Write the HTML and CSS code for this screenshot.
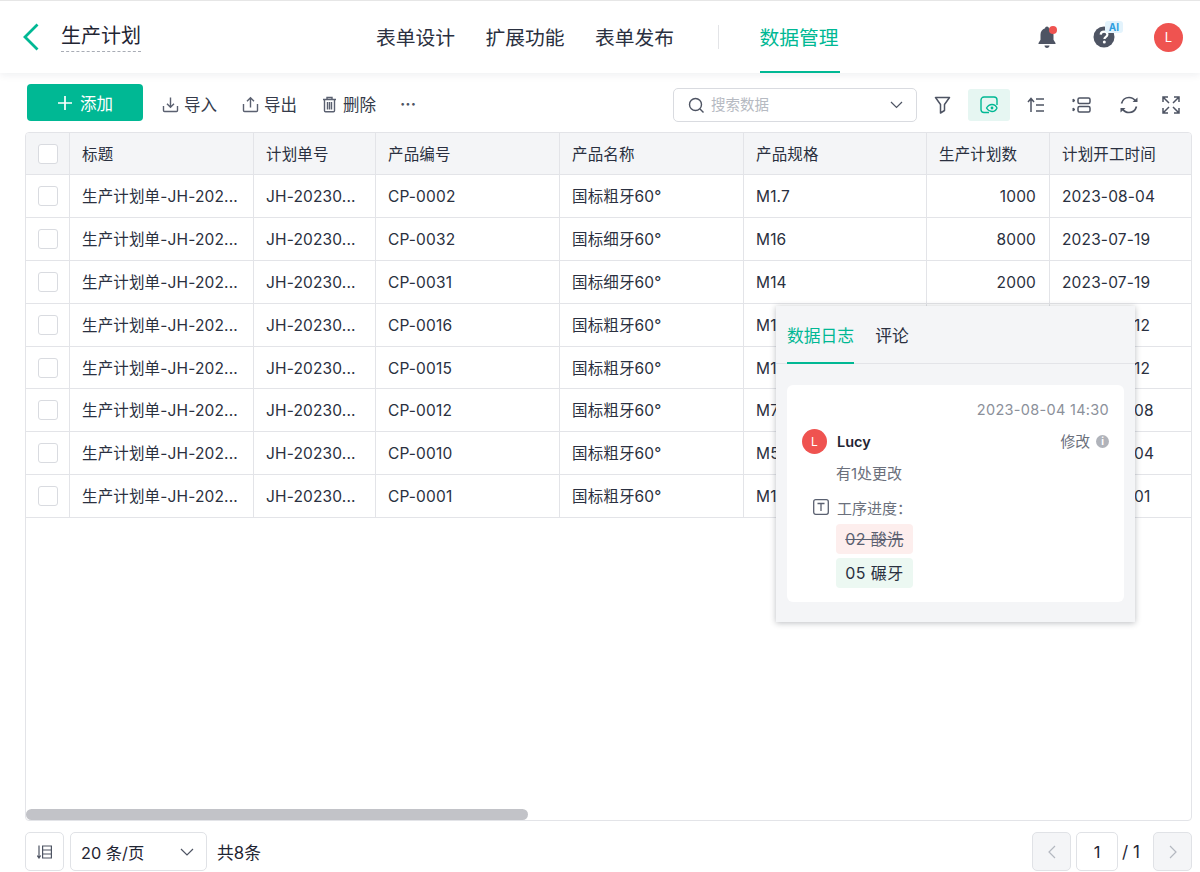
FILE: index.html
```html
<!DOCTYPE html>
<html lang="zh">
<head>
<meta charset="utf-8">
<title>生产计划</title>
<link rel="stylesheet" href="styles.css">
</head>
<body>
<header class="topbar">
  <div class="top-left">
    <svg class="back" width="18" height="28" viewBox="0 0 18 28"><path d="M15.500 1.500 L3 14 L15.500 26.500" fill="none" stroke="#00b894" stroke-width="2.800"/></svg>
    <span class="app-name">生产计划</span>
  </div>
  <nav class="nav">
    <span class="nav-item">表单设计</span>
    <span class="nav-item">扩展功能</span>
    <span class="nav-item">表单发布</span>
    <span class="nav-sep"></span>
    <span class="nav-item active">数据管理</span>
  </nav>
  <div class="top-right">
    <span class="ico-bell">
      <svg width="20" height="24" viewBox="0 0 20 24"><path d="M10 1.500c1.100 0 1.800.8 1.900 1.700 3 .9 4.600 3.300 4.600 6.500v5l2 3.300v1H1.500v-1l2-3.300v-5c0-3.200 1.600-5.600 4.600-6.500.1-.9.800-1.700 1.900-1.700zM7.500 20.500h5c0 1.500-1.100 2.500-2.500 2.500s-2.500-1-2.500-2.500z" fill="#4e5463"/></svg>
      <i class="dot"></i>
    </span>
    <span class="ico-help">
      <svg width="22" height="22" viewBox="0 0 22 22"><circle cx="11" cy="11" r="10.500" fill="#4e5463"/><path d="M7.700 8.600c.1-1.900 1.500-3 3.400-3s3.300 1.100 3.300 2.800c0 2.400-3 2.500-3 4.700" fill="none" stroke="#fff" stroke-width="2.200"/><circle cx="11.300" cy="16" r="1.500" fill="#fff"/></svg>
      <b class="ai">AI</b>
    </span>
    <span class="avatar big">L</span>
  </div>
</header>

<section class="toolbar">
  <div class="tools-left">
    <button class="add"><svg width="16" height="16" viewBox="0 0 16 16"><path d="M8 1v14M1 8h14" stroke="#fff" stroke-width="1.700"/></svg><span>添加</span></button>
    <span class="tool"><svg width="17" height="17" viewBox="0 0 17 17"><path d="M8.500 1.500v9.500M5 7.800l3.500 3.400L12 7.800M1.500 10v4.500a1 1 0 0 0 1 1h12a1 1 0 0 0 1-1V10" fill="none" stroke="#5a6070" stroke-width="1.400"/></svg>导入</span>
    <span class="tool"><svg width="17" height="17" viewBox="0 0 17 17"><path d="M8.500 11.500V1.800M5 5.200l3.500-3.400L12 5.200M1.500 8v6.500a1 1 0 0 0 1 1h12a1 1 0 0 0 1-1V8" fill="none" stroke="#5a6070" stroke-width="1.400"/></svg>导出</span>
    <span class="tool"><svg width="15" height="17" viewBox="0 0 15 17"><path d="M1 3.500h13M5 3.500V1.500h5v2M2.500 3.500v11.200a1 1 0 0 0 1 1h8a1 1 0 0 0 1-1V3.500M5.500 6v7.500M7.500 6v7.500M9.500 6v7.500" fill="none" stroke="#5a6070" stroke-width="1.400"/></svg>删除</span>
    <span class="more">···</span>
  </div>
  <div class="tools-right">
    <div class="search">
      <svg width="17" height="17" viewBox="0 0 17 17"><circle cx="7.500" cy="7.500" r="6" fill="none" stroke="#4e5463" stroke-width="1.400"/><path d="M12 12l3.500 3.500" stroke="#4e5463" stroke-width="1.400"/></svg>
      <span class="ph">搜索数据</span>
      <svg class="chev" width="13" height="8" viewBox="0 0 13 8"><path d="M1 1l5.500 5.500L12 1" fill="none" stroke="#4e5463" stroke-width="1.200"/></svg>
    </div>
    <span class="ibtn i-filter"><svg width="17" height="18" viewBox="0 0 17 18"><path d="M1.500 1.500h14l-5 7v6l-4 2.500V8.500z" fill="none" stroke="#4e5463" stroke-width="1.500" stroke-linejoin="round"/></svg></span>
    <span class="ibtn on"><svg width="18" height="18" viewBox="0 0 18 18"><path d="M9 16.500H4a3 3 0 0 1-3-3V4a3 3 0 0 1 3-3h10a3 3 0 0 1 3 3v5" fill="none" stroke="#00b894" stroke-width="1.400"/><path d="M6.500 12c1.500-2.500 3.500-3.500 5.500-3.500s4 1 5 3.500c-1 2.500-3 3.500-5 3.500s-4-1-5.500-3.500z" fill="#e6f6f2" stroke="#00b894" stroke-width="1.300"/><circle cx="12" cy="12" r="1.400" fill="#00b894"/></svg></span>
    <span class="ibtn i-sort"><svg width="18" height="16" viewBox="0 0 18 16"><path d="M4 15V2M1 5l3-3.500L7 5M9 2h8M9 8h8M9 14h8" fill="none" stroke="#4e5463" stroke-width="1.500"/></svg></span>
    <span class="ibtn i-group"><svg width="19" height="16" viewBox="0 0 19 16"><rect x="6" y="1" width="12" height="5.500" rx="1.500" fill="none" stroke="#4e5463" stroke-width="1.500"/><rect x="6" y="9.500" width="12" height="5.500" rx="1.500" fill="none" stroke="#4e5463" stroke-width="1.500"/><path d="M1 2v3l2-1.500zM1 11v3l2-1.500z" fill="#4e5463" stroke="#4e5463"/></svg></span>
    <span class="ibtn i-refresh"><svg width="20" height="18" viewBox="0 0 20 18"><path d="M2.500 7.500C3.500 4 6.500 1.500 10 1.500c2.800 0 5 1.300 6.500 3.500M17.500 10.500c-1 3.500-4 6-7.500 6-2.800 0-5-1.300-6.500-3.500" fill="none" stroke="#4e5463" stroke-width="1.700"/><path d="M13.500 6h5V1.500zM6.500 12h-5v4.500z" fill="#4e5463"/></svg></span>
    <span class="ibtn"><svg width="18" height="18" viewBox="0 0 18 18"><path d="M1 6V1h5M12 1h5v5M17 12v5h-5M6 17H1v-5M1.500 1.500L7 7M16.500 1.500L11 7M16.500 16.500L11 11M1.500 16.500L7 11" fill="none" stroke="#4e5463" stroke-width="1.500"/></svg></span>
  </div>
</section>

<main class="table">
  <div class="row head">
    <div class="cell c0"><i class="check"></i></div>
    <div class="cell c1">标题</div><div class="cell c2">计划单号</div><div class="cell c3">产品编号</div><div class="cell c4">产品名称</div><div class="cell c5">产品规格</div><div class="cell c6">生产计划数</div><div class="cell c7">计划开工时间</div>
  </div>
  <div class="row"><div class="cell c0"><i class="check"></i></div><div class="cell c1">生产计划单-JH-202...</div><div class="cell c2">JH-20230...</div><div class="cell c3">CP-0002</div><div class="cell c4">国标粗牙60°</div><div class="cell c5">M1.7</div><div class="cell c6 num">1000</div><div class="cell c7">2023-08-04</div></div>
  <div class="row"><div class="cell c0"><i class="check"></i></div><div class="cell c1">生产计划单-JH-202...</div><div class="cell c2">JH-20230...</div><div class="cell c3">CP-0032</div><div class="cell c4">国标细牙60°</div><div class="cell c5">M16</div><div class="cell c6 num">8000</div><div class="cell c7">2023-07-19</div></div>
  <div class="row"><div class="cell c0"><i class="check"></i></div><div class="cell c1">生产计划单-JH-202...</div><div class="cell c2">JH-20230...</div><div class="cell c3">CP-0031</div><div class="cell c4">国标细牙60°</div><div class="cell c5">M14</div><div class="cell c6 num">2000</div><div class="cell c7">2023-07-19</div></div>
  <div class="row"><div class="cell c0"><i class="check"></i></div><div class="cell c1">生产计划单-JH-202...</div><div class="cell c2">JH-20230...</div><div class="cell c3">CP-0016</div><div class="cell c4">国标粗牙60°</div><div class="cell c5">M12</div><div class="cell c6 num">3000</div><div class="cell c7">2023-07-12</div></div>
  <div class="row"><div class="cell c0"><i class="check"></i></div><div class="cell c1">生产计划单-JH-202...</div><div class="cell c2">JH-20230...</div><div class="cell c3">CP-0015</div><div class="cell c4">国标粗牙60°</div><div class="cell c5">M10</div><div class="cell c6 num">5000</div><div class="cell c7">2023-07-12</div></div>
  <div class="row"><div class="cell c0"><i class="check"></i></div><div class="cell c1">生产计划单-JH-202...</div><div class="cell c2">JH-20230...</div><div class="cell c3">CP-0012</div><div class="cell c4">国标粗牙60°</div><div class="cell c5">M7</div><div class="cell c6 num">4000</div><div class="cell c7">2023-07-08</div></div>
  <div class="row"><div class="cell c0"><i class="check"></i></div><div class="cell c1">生产计划单-JH-202...</div><div class="cell c2">JH-20230...</div><div class="cell c3">CP-0010</div><div class="cell c4">国标粗牙60°</div><div class="cell c5">M5</div><div class="cell c6 num">6000</div><div class="cell c7">2023-07-04</div></div>
  <div class="row"><div class="cell c0"><i class="check"></i></div><div class="cell c1">生产计划单-JH-202...</div><div class="cell c2">JH-20230...</div><div class="cell c3">CP-0001</div><div class="cell c4">国标粗牙60°</div><div class="cell c5">M1.6</div><div class="cell c6 num">1000</div><div class="cell c7">2023-07-01</div></div>
  <div class="thumb"></div>
</main>

<footer class="pager">
  <div class="pager-left">
    <span class="pbtn"><svg width="15" height="14" viewBox="0 0 15 14"><path d="M2 .5v12M.3 10.500L2 13l1.700-2.500M5.600 1h8.800v12H5.600zM5.600 5h8.800M5.600 9h8.800" fill="none" stroke="#4e5463" stroke-width="1.200"/></svg></span>
    <span class="psize">20 条/页<svg width="14" height="8" viewBox="0 0 14 8"><path d="M1 1l6 6 6-6" fill="none" stroke="#4e5463" stroke-width="1.200"/></svg></span>
    <span class="total">共8条</span>
  </div>
  <div class="pager-right">
    <span class="pbtn off"><svg width="10" height="14" viewBox="0 0 10 14"><path d="M8 1L2 7l6 6" fill="none" stroke="#b4b8c0" stroke-width="1.200"/></svg></span>
    <span class="pinput">1</span>
    <span class="ptotal">/ 1</span>
    <span class="pbtn off"><svg width="10" height="14" viewBox="0 0 10 14"><path d="M2 1l6 6-6 6" fill="none" stroke="#b4b8c0" stroke-width="1.200"/></svg></span>
  </div>
</footer>

<aside class="panel">
  <div class="tabs">
    <span class="tab active">数据日志</span>
    <span class="tab">评论</span>
  </div>
  <div class="log">
    <div class="log-time">2023-08-04 14:30</div>
    <div class="log-head">
      <span class="avatar small">L</span>
      <b class="log-user">Lucy</b>
      <span class="log-type">修改<i class="info">i</i></span>
    </div>
    <div class="log-desc">有1处更改</div>
    <div class="log-field">
      <svg width="16" height="16" viewBox="0 0 16 16"><rect x=".7" y=".7" width="14.600" height="14.600" rx="2" fill="none" stroke="#5a6070" stroke-width="1.300"/><path d="M4.500 4.500h7M8 4.500v7.500" fill="none" stroke="#5a6070" stroke-width="1.300"/></svg>
      <span>工序进度：</span>
    </div>
    <div class="tag del">02 酸洗</div>
    <div class="tag new">05 碾牙</div>
  </div>
</aside>
</body>
</html>
```
FILE: styles.css
```css
* { box-sizing: border-box; }
html, body { margin: 0; padding: 0; }
body {
  width: 1200px;
  height: 872px;
  overflow: hidden;
  position: relative;
  background: #fff;
  color: #1f2533;
  font-family: Inter, "Noto Sans CJK SC", sans-serif;
  font-size: 15px;
  display: flex;
  flex-direction: column;
}
.topbar {
  height: 73px;
  flex: none;
  border-top: 1px solid #e6e6e6;
  display: flex;
  align-items: center;
  position: relative;
  box-shadow: 0 2px 8px rgba(20, 30, 50, 0.07);
}
.top-left { display: flex; align-items: center; padding-left: 22px; width: 376px; }
.back { margin-right: 21px; margin-top: -1px; }
.app-name {
  font-size: 20px;
  line-height: 28px;
  border-bottom: 1px dashed #a8acb5;
  padding-bottom: 1px;
}
.nav { display: flex; align-items: center; height: 72px; }
.nav-item {
  font-size: 19.800px;
  height: 72px;
  line-height: 74px;
  margin-right: 30.500px;
  width: 79px;
  white-space: nowrap;
  color: #2a3040;
}
.nav-sep { width: 1px; height: 24px; background: #e3e4e7; margin: 0 41px 0 13px; }
.nav-item.active { width: 80px; color: #00b894; border-bottom: 2px solid #00b894; margin: 0; }
.top-right { margin-left: auto; display: flex; align-items: center; padding-right: 17px; }
.ico-bell { position: relative; width: 20px; height: 24px; margin-right: 36px; }
.dot { position: absolute; top: 1px; right: 0; width: 8px; height: 8px; border-radius: 50%; background: #ef5350; }
.ico-help { position: relative; width: 22px; height: 22px; margin-right: 39px; }
.ai {
  position: absolute;
  top: -5px;
  left: 12px;
  width: 18px;
  height: 12px;
  border-radius: 3px;
  background: #e3f3fc;
  color: #2f9fe0;
  font-size: 10px;
  line-height: 12px;
  text-align: center;
}
.avatar { background: #ef5350; color: #fff; border-radius: 50%; display: flex; align-items: center; justify-content: center; flex: none; }
.avatar.big { width: 29px; height: 29px; font-size: 13px; }
.avatar.small { width: 25px; height: 25px; font-size: 12px; }

.toolbar {
  height: 59px;
  flex: none;
  padding: 11px 8px 0 27px;
  display: flex;
  justify-content: space-between;
}
.tools-left { display: flex; align-items: flex-start; }
.add {
  width: 116px;
  height: 37px;
  border: 0;
  border-radius: 4px;
  background: #00b894;
  color: #fff;
  font: inherit;
  font-size: 16.500px;
  display: flex;
  align-items: center;
  justify-content: center;
  gap: 7px;
  margin-right: 19px;
}
.tool { display: flex; align-items: center; gap: 5px; height: 40px; margin-right: 25px; color: #353b4a; font-size: 16.500px; }
.tool:nth-child(4) { margin-right: 24px; gap: 6px; }
.more { font-size: 16px; font-weight: 700; color: #4e5463; line-height: 40px; }
.tools-right { display: flex; align-items: flex-start; margin-top: 4px; }
.search {
  width: 244px;
  height: 34px;
  border: 1px solid #d9dbe0;
  border-radius: 5px;
  display: flex;
  align-items: center;
  padding: 0 13px 0 14px;
  gap: 6px;
}
.ph { color: #b6bac2; font-size: 14.500px; line-height: 20px; flex: 1; margin-top: -1px; }
.ibtn { width: 42px; height: 32px; display: flex; align-items: center; justify-content: center; margin-top: 1px; }
.i-filter { margin-left: 4px; }
.on, .i-sort { margin-left: 5px; }
.i-group { margin-left: 3px; }
.i-refresh { margin-left: 6px; }
.ibtn.on { background: #e6f6f2; border-radius: 3px; }

.table {
  flex: none;
  height: 689px;
  margin: 0 8px 0 25px;
  border: 1px solid #e3e4e8;
  border-radius: 4px;
  position: relative;
  overflow: hidden;
}
.row { display: flex; height: 42.900px; border-bottom: 1px solid #e3e4e8; }
.row.head { height: 42px; background: #f4f5f7; }
.cell {
  padding: 2px 12px 0;
  display: flex;
  align-items: center;
  border-right: 1px solid #e3e4e8;
  font-size: 15.500px;
  line-height: 20px;
  letter-spacing: .15px;
  color: #2a3040;
  white-space: nowrap;
  flex: none;
  overflow: hidden;
}
.c0 { width: 44px; padding: 0 0 0 12px; }
.c1 { width: 184px; }
.c2 { width: 122px; }
.c3 { width: 184px; }
.c4 { width: 184px; }
.c5 { width: 183px; }
.c6 { width: 123px; }
.c7 { width: 143px; border-right: 0; }
.num { justify-content: flex-end; padding-right: 13px; }
.check { width: 20px; height: 20px; border: 1px solid #d9dbe0; border-radius: 3px; background: #fff; display: block; }
.thumb { position: absolute; left: 0; bottom: 0; width: 502px; height: 11px; background: #c2c3c8; border-radius: 6px; }

.pager {
  flex: 1;
  padding: 11px 8px 0 25px;
  display: flex;
  justify-content: space-between;
  align-items: flex-start;
}
.pager-left, .pager-right { display: flex; align-items: center; }
.pbtn {
  width: 39px;
  height: 39px;
  border: 1px solid #e0e2e6;
  border-radius: 5px;
  display: flex;
  align-items: center;
  justify-content: center;
}
.pbtn.off { background: #f4f5f7; }
.psize {
  width: 137px;
  height: 39px;
  margin-left: 6px;
  border: 1px solid #e0e2e6;
  border-radius: 5px;
  display: flex;
  align-items: center;
  justify-content: space-between;
  padding: 0 12px 0 10px;
  font-size: 16.300px;
}
.total { margin-left: 10px; font-size: 16.800px; }
.pinput {
  width: 42px;
  height: 39px;
  margin-left: 5px;
  border: 1px solid #e0e2e6;
  border-radius: 5px;
  display: flex;
  align-items: center;
  justify-content: center;
  font-size: 16.500px;
}
.ptotal { width: 39px; padding-left: 4px; font-size: 17px; text-align: left; }
.ptotal + .pbtn { margin-left: -4px; }

.panel {
  position: absolute;
  left: 776px;
  top: 306px;
  width: 359px;
  height: 316px;
  background: #f4f5f7;
  box-shadow: 0 1px 6px rgba(30, 35, 50, 0.3);
  padding: 0 11px;
}
.tabs { height: 58px; margin: 0 -11px; padding: 0 11px; display: flex; gap: 21px; border-bottom: 1px solid #e3e4e8; }
.tab { height: 58px; line-height: 60px; font-size: 16.800px; color: #2a3040; }
.tab.active { color: #00b894; border-bottom: 2px solid #00b894; }
.log {
  margin-top: 21px;
  height: 217px;
  background: #fff;
  border-radius: 6px;
  padding: 16px 15px 0;
}
.log-time { text-align: right; color: #8b909a; font-size: 14.500px; line-height: 18px; letter-spacing: .3px; }
.log-head { display: flex; align-items: center; margin-top: 10px; height: 25px; }
.log-user { margin-left: 10px; font-size: 14.500px; line-height: 20px; font-weight: 600; }
.log-type { margin-left: auto; color: #6b707c; font-size: 14.800px; line-height: 20px; display: flex; align-items: center; gap: 6px; }
.info { width: 13px; height: 13px; border-radius: 50%; background: #b0b3ba; color: #fff; font-size: 10px; font-style: normal; font-weight: 700; line-height: 13px; text-align: center; display: block; }
.log-desc { margin: 10px 0 0 34px; color: #6b707c; font-size: 15px; line-height: 20px; }
.log-field { display: flex; align-items: center; gap: 8px; margin: 13px 0 0 11px; height: 20px; color: #6b707c; font-size: 15px; }
.tag { width: 77px; height: 30px; margin: 4px 0 0 34px; border-radius: 4px; font-size: 16px; letter-spacing: .4px; line-height: 30px; text-align: center; }
.tag.del { margin-top: 7px; background: #fdeeed; color: #5a6070; text-decoration: line-through; }
.tag.new { background: #ecf8f2; color: #2a3040; }
```
